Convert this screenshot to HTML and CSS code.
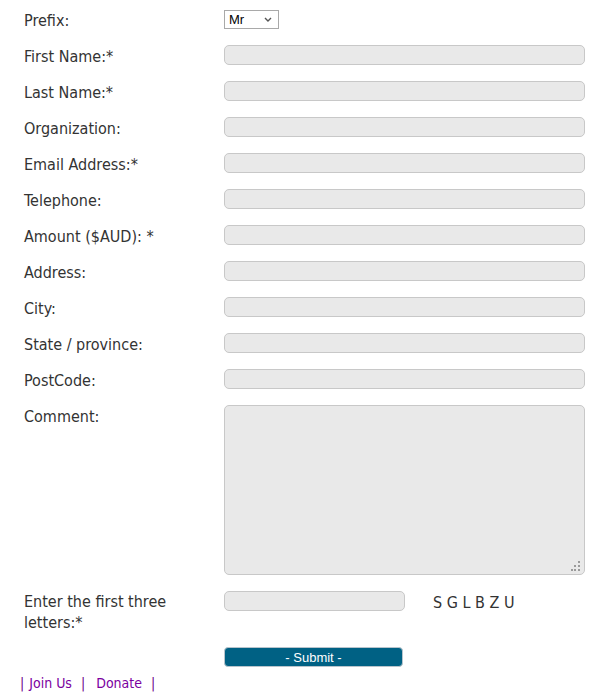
FILE: index.html
```html
<!DOCTYPE html>
<html>
<head>
<meta charset="utf-8">
<link rel="stylesheet" href="styles.css">
</head>
<body>
<form class="form">
  <div class="row"><label class="lbl">Prefix:</label>
    <span class="sel-wrap"><select class="sel"><option>Mr</option><option>Mrs</option><option>Ms</option></select><svg class="chev" width="8" height="5" viewBox="0 0 8 5"><path d="M1 1 L4 4 L7 1" fill="none" stroke="#555" stroke-width="1.4"/></svg></span></div>
  <div class="row"><label class="lbl">First Name:*</label><input class="inp" type="text"></div>
  <div class="row"><label class="lbl">Last Name:*</label><input class="inp" type="text"></div>
  <div class="row"><label class="lbl">Organization:</label><input class="inp" type="text"></div>
  <div class="row"><label class="lbl">Email Address:*</label><input class="inp" type="text"></div>
  <div class="row"><label class="lbl">Telephone:</label><input class="inp" type="text"></div>
  <div class="row"><label class="lbl">Amount ($AUD): *</label><input class="inp" type="text"></div>
  <div class="row"><label class="lbl">Address:</label><input class="inp" type="text"></div>
  <div class="row"><label class="lbl">City:</label><input class="inp" type="text"></div>
  <div class="row"><label class="lbl">State / province:</label><input class="inp" type="text"></div>
  <div class="row"><label class="lbl">PostCode:</label><input class="inp" type="text"></div>
  <div class="row"><label class="lbl">Comment:</label><span class="txt-wrap"><textarea class="txt"></textarea><svg class="grip" width="10" height="10" viewBox="0 0 10 10"><g fill="#9a9a9a"><rect x="7" y="0" width="2" height="2"/><rect x="3" y="4" width="2" height="2"/><rect x="7" y="4" width="2" height="2"/><rect x="0" y="8" width="2" height="2"/><rect x="3" y="8" width="2" height="2"/><rect x="7" y="8" width="2" height="2"/></g></svg></span></div>
  <div class="row row-captcha"><label class="lbl lbl-wrap">Enter the first three letters:*</label><input class="inp inp-short" type="text"><span class="captcha">S G L B Z U</span></div>
  <div class="row row-submit"><span class="lbl"></span><button class="btn" type="button">- Submit -</button></div>
</form>
<div class="links"><span class="sep">|</span><a class="lnk" href="#">Join Us</a><span class="sep">|</span><a class="lnk lnk2" href="#">Donate</a><span class="sep">|</span></div>
</body>
</html>
```
FILE: styles.css
```css
html, body {
  margin: 0;
  padding: 0;
  background: #fff;
}
body {
  font-family: "DejaVu Sans Condensed", "DejaVu Sans", sans-serif;
  font-size: 16px;
  color: #333;
}
.form {
  padding: 1px 0 0 24px;
  margin: 0;
}
.row {
  display: flex;
  align-items: flex-start;
  padding: 8px 0;
}
.lbl {
  width: 200px;
  flex: none;
  line-height: 20px;
  margin-top: 2px;
  margin-bottom: -2px;
}
.lbl-wrap {
  width: 160px;
  margin-right: 40px;
  line-height: 21px;
  margin-top: 0;
  margin-bottom: 0;
}
.row-captcha {
  padding-bottom: 6px;
}
.row-submit {
  padding-top: 8px;
  padding-bottom: 6px;
}
.sel-wrap {
  position: relative;
  display: inline-block;
  margin-top: 1px;
}
.sel {
  display: block;
  width: 55px;
  height: 19px;
  padding: 0 0 0 4px;
  border: 1px solid #a9a9a9;
  border-radius: 0;
  background: #fff;
  font-family: "Liberation Sans", Arial, sans-serif;
  font-size: 13px;
  color: #000;
  appearance: none;
  -webkit-appearance: none;
}
.chev {
  position: absolute;
  right: 7px;
  top: 7px;
  pointer-events: none;
}
.inp {
  width: 361px;
  height: 20px;
  box-sizing: border-box;
  margin: 0;
  border: 1px solid #c8c8c8;
  border-radius: 5px;
  background: #e9e9e9;
  padding: 0 4px;
}
.inp-short {
  width: 181px;
}
.txt-wrap {
  position: relative;
  display: block;
  width: 361px;
  height: 170px;
}
.txt {
  display: block;
  width: 361px;
  height: 170px;
  box-sizing: border-box;
  margin: 0;
  border: 1px solid #c8c8c8;
  border-radius: 5px;
  background: #e9e9e9;
  resize: none;
}
.grip {
  position: absolute;
  right: 4px;
  bottom: 4px;
}
.captcha {
  margin-left: 28px;
  line-height: 20px;
  margin-top: 2px;
  margin-bottom: -2px;
  color: #333;
}
.btn {
  width: 179px;
  height: 20px;
  box-sizing: border-box;
  margin: 0;
  padding: 0;
  border: 1px solid #b8c4cc;
  border-radius: 4px;
  background: #006184;
  color: #fff;
  font-family: "Liberation Sans", Arial, sans-serif;
  font-size: 13px;
}
.links {
  display: flex;
  padding: 0 0 0 20px;
  line-height: 20px;
  font-size: 14px;
}
.lnk {
  color: #7b00a0;
  text-decoration: none;
  margin: 0 9px 0 5px;
}
.lnk2 {
  margin-left: 11px;
}
.sep {
  color: #6a0088;
}
```
